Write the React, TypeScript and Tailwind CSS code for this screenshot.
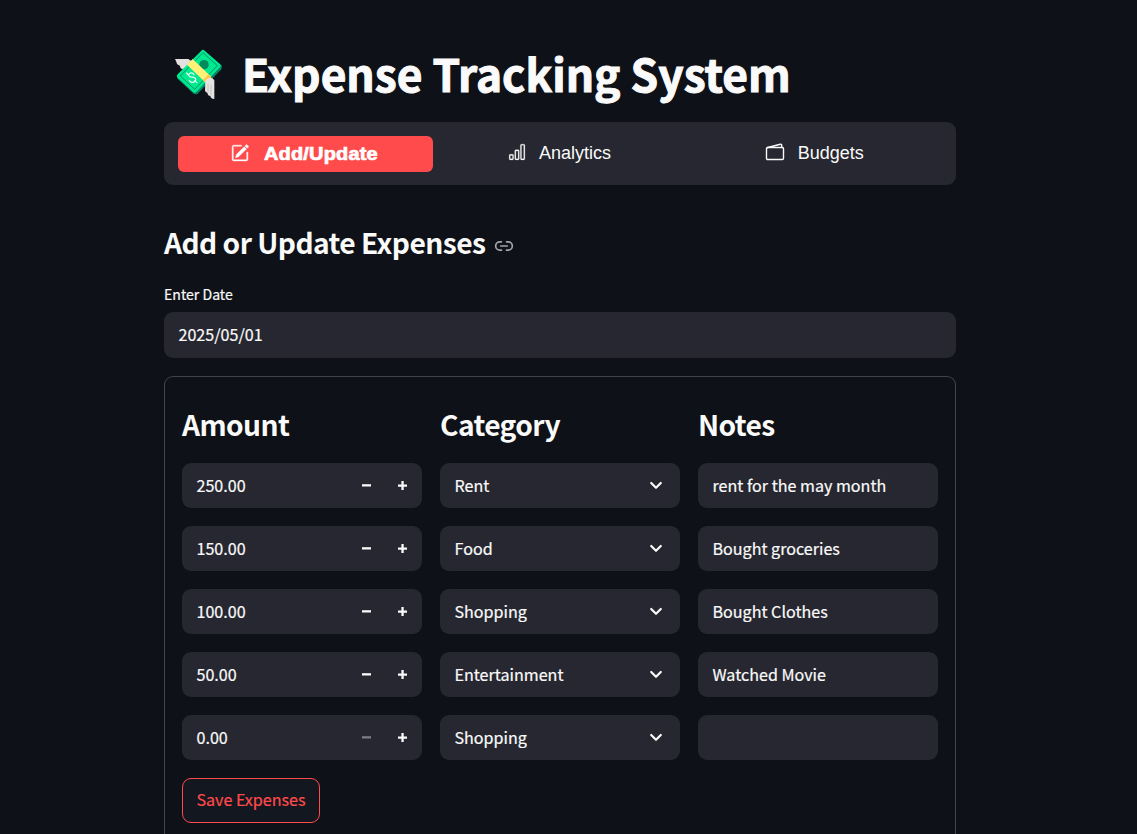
import type { ReactNode } from "react";
import { BsBarChart, BsPencilSquare } from "react-icons/bs";
import { Link2 } from "lucide-react";

type Row = { amount: string; category: string; note: string; atMinimum?: boolean };

const rows: Row[] = [
  { amount: "250.00", category: "Rent", note: "rent for the may month" },
  { amount: "150.00", category: "Food", note: "Bought groceries" },
  { amount: "100.00", category: "Shopping", note: "Bought Clothes" },
  { amount: "50.00", category: "Entertainment", note: "Watched Movie" },
  { amount: "0.00", category: "Shopping", note: "", atMinimum: true },
];

function MoneyWithWings() {
  return (
    <svg viewBox="0 0 210 210" className="h-[70px] w-[70px] shrink-0" aria-hidden="true">
      <path d="M33 57h40l14 10-26 22c-10-2-14-7-13-12-8-3-11-8-11-12z" fill="#e3e1e0" />
      <path d="M39 106v9l50 46q7 4 12 0l71-73q4-5 1-12l-8-5z" fill="#058562" />
      <path d="M112 32q5-5 10 0l46 40q5 5 0 10l-71 74q-5 5-10 0l-46-43q-5-5 0-10z" fill="#00e890" />
      <path d="M117 38l43 39-68 71-43-40z" fill="none" stroke="#008a5d" strokeWidth="2.6" strokeLinejoin="round" />
      <circle cx="120" cy="74" r="14" fill="#008a5d" />
      <path d="M90 104c-6-9-18-5-15 3 3 7 18 1 20 10 2 8-12 15-19 5M68 99l6 7M92 122l7 6" fill="none" stroke="#e8fff5" strokeWidth="3.6" strokeLinecap="round" />
      <path d="M86 57l56 54-17 17-56-54z" fill="#fff078" />
      <path d="M134 103l8 8-17 17-8-8z" fill="#ffc647" />
      <path d="M124 124c5-12 20-15 27-3v56c-7 0-11-3-12-9-6 0-8-5-9-10-5-1-7-4-7-8z" fill="#e5e3e2" />
      <path d="M132 132v25M141 135v34" stroke="#bcb9b8" strokeWidth="2" />
    </svg>
  );
}

function Wallet() {
  return (
    <svg viewBox="0 0 20 18" className="mr-[13px] mb-0.5 -ml-px h-[18px] w-5" fill="none" stroke="currentColor" strokeWidth="1.4" strokeLinejoin="round">
      <rect x="1.5" y="4.5" width="17" height="12" rx="1.2" />
      <path d="M1.8 4.8L15.3 1.2q1.1-.3 1.3.8l.4 2.4" />
    </svg>
  );
}

function Field({ children }: { children?: ReactNode }) {
  return (
    <div className="flex h-[45px] min-w-0 items-center rounded-[9px] bg-[#262730] pr-[15px] pl-[14.5px] text-[16.1px] leading-6 [-webkit-text-stroke:0.2px_#fafafa]">
      {children}
    </div>
  );
}

function Minus({ dim }: { dim?: boolean }) {
  return (
    <svg viewBox="0 0 9 9" className="h-[9px] w-[9px]" aria-label="Decrease">
      <path d="M0 3.2h9v2.3H0z" fill={dim ? "#7b7c86" : "#fafafa"} />
    </svg>
  );
}

function Plus() {
  return (
    <svg viewBox="0 0 9 9" className="h-[9px] w-[9px]" aria-label="Increase">
      <path d="M3.4 0h2.3v3.4H9v2.3H5.7V9H3.4V5.7H0V3.4h3.4z" fill="#fafafa" />
    </svg>
  );
}

function Chevron() {
  return (
    <svg viewBox="0 0 14 9" className="mr-[2px] ml-auto h-[9px] w-[14px]" fill="none" stroke="#fafafa" strokeWidth="2.2" strokeLinecap="round" strokeLinejoin="round">
      <path d="M2.2 2l4.8 4.8L11.8 2" />
    </svg>
  );
}

export default function App() {
  return (
    <div className="h-[834px] overflow-hidden bg-[#0e1117] font-['Noto_Sans_CJK_SC',sans-serif] text-[#fafafa]">
      <main className="ml-[164px] w-[792px] pt-10">
        <h1 className="flex h-[70px] items-center text-[44.3px] leading-[60px] font-bold">
          <MoneyWithWings />
          <span className="ml-2 pb-1 whitespace-nowrap [-webkit-text-stroke:1px_#fafafa]">Expense Tracking System</span>
        </h1>

        <nav className="mt-3 grid h-[63px] grid-cols-3 rounded-[9px] bg-[#262730] px-3.5 pt-3.5 font-['Liberation_Sans',sans-serif] text-lg leading-[27px]">
          <a className="flex h-9 items-center rounded-md bg-[#ff4b4b] pl-[53px] font-black text-white">
            <BsPencilSquare className="mr-[15px] mb-0.5 h-[18px] w-[18px] [stroke-width:0.4px]" />
            <span className="origin-left scale-x-[1.11] tracking-[0.15px] [-webkit-text-stroke:0.7px_#ffffff]">Add/Update</span>
          </a>
          <a className="flex h-[34px] items-center justify-center">
            <BsBarChart className="mr-[13px] mb-0.5 -ml-px h-[18px] w-[18px] [stroke-width:0.2px]" />
            <span>Analytics</span>
          </a>
          <a className="flex h-[34px] items-center justify-center">
            <Wallet />
            <span>Budgets</span>
          </a>
        </nav>

        <h2 className="mt-[38px] flex h-[38px] items-center text-[28.2px] leading-[38px] font-semibold tracking-[-0.55px]">
          Add or Update Expenses
          <Link2 className="mt-[7px] ml-[9px] h-5 w-5 text-[#a3a4a8]" strokeWidth={2} />
        </h2>

        <label className="mt-[21px] block h-6 text-[14.1px] leading-6 [-webkit-text-stroke:0.2px_#fafafa]">Enter Date</label>
        <div className="mt-[6px] flex h-[46px] items-center rounded-[9px] bg-[#262730] px-[14.5px] pb-0.5 text-[16.1px] leading-6 [-webkit-text-stroke:0.2px_#fafafa]">2025/05/01</div>

        <section className="mt-[18px] h-[500px] rounded-t-[9px] border border-b-0 border-[#41444c] px-[17px] pt-7">
          <div className="grid h-10 grid-cols-3 gap-[18px] text-[28.2px] leading-[38px] font-semibold tracking-[-0.6px]">
            <h3>Amount</h3>
            <h3>Category</h3>
            <h3>Notes</h3>
          </div>
          <div className="mt-[18px] flex flex-col gap-[18px]">
            {rows.map((row, index) => (
              <div key={index} className="grid grid-cols-3 gap-[18px]">
                <Field>
                  <span className="pb-0.5">{row.amount}</span>
                  <span className="ml-auto flex gap-[27px]">
                    <Minus dim={row.atMinimum} />
                    <Plus />
                  </span>
                </Field>
                <Field>
                  <span className="pb-0.5">{row.category}</span>
                  <Chevron />
                </Field>
                <Field>
                  <span className="pb-0.5">{row.note}</span>
                </Field>
              </div>
            ))}
          </div>
          <button className="mt-[18px] flex h-[45px] w-[138px] items-center justify-center rounded-[9px] border border-[#ff4b4b] bg-[#131720] pb-[3px] text-[16.1px] leading-6 whitespace-nowrap text-[#ff4b4b] [-webkit-text-stroke:0.2px_#ff4b4b]">
            Save Expenses
          </button>
        </section>
      </main>
    </div>
  );
}
